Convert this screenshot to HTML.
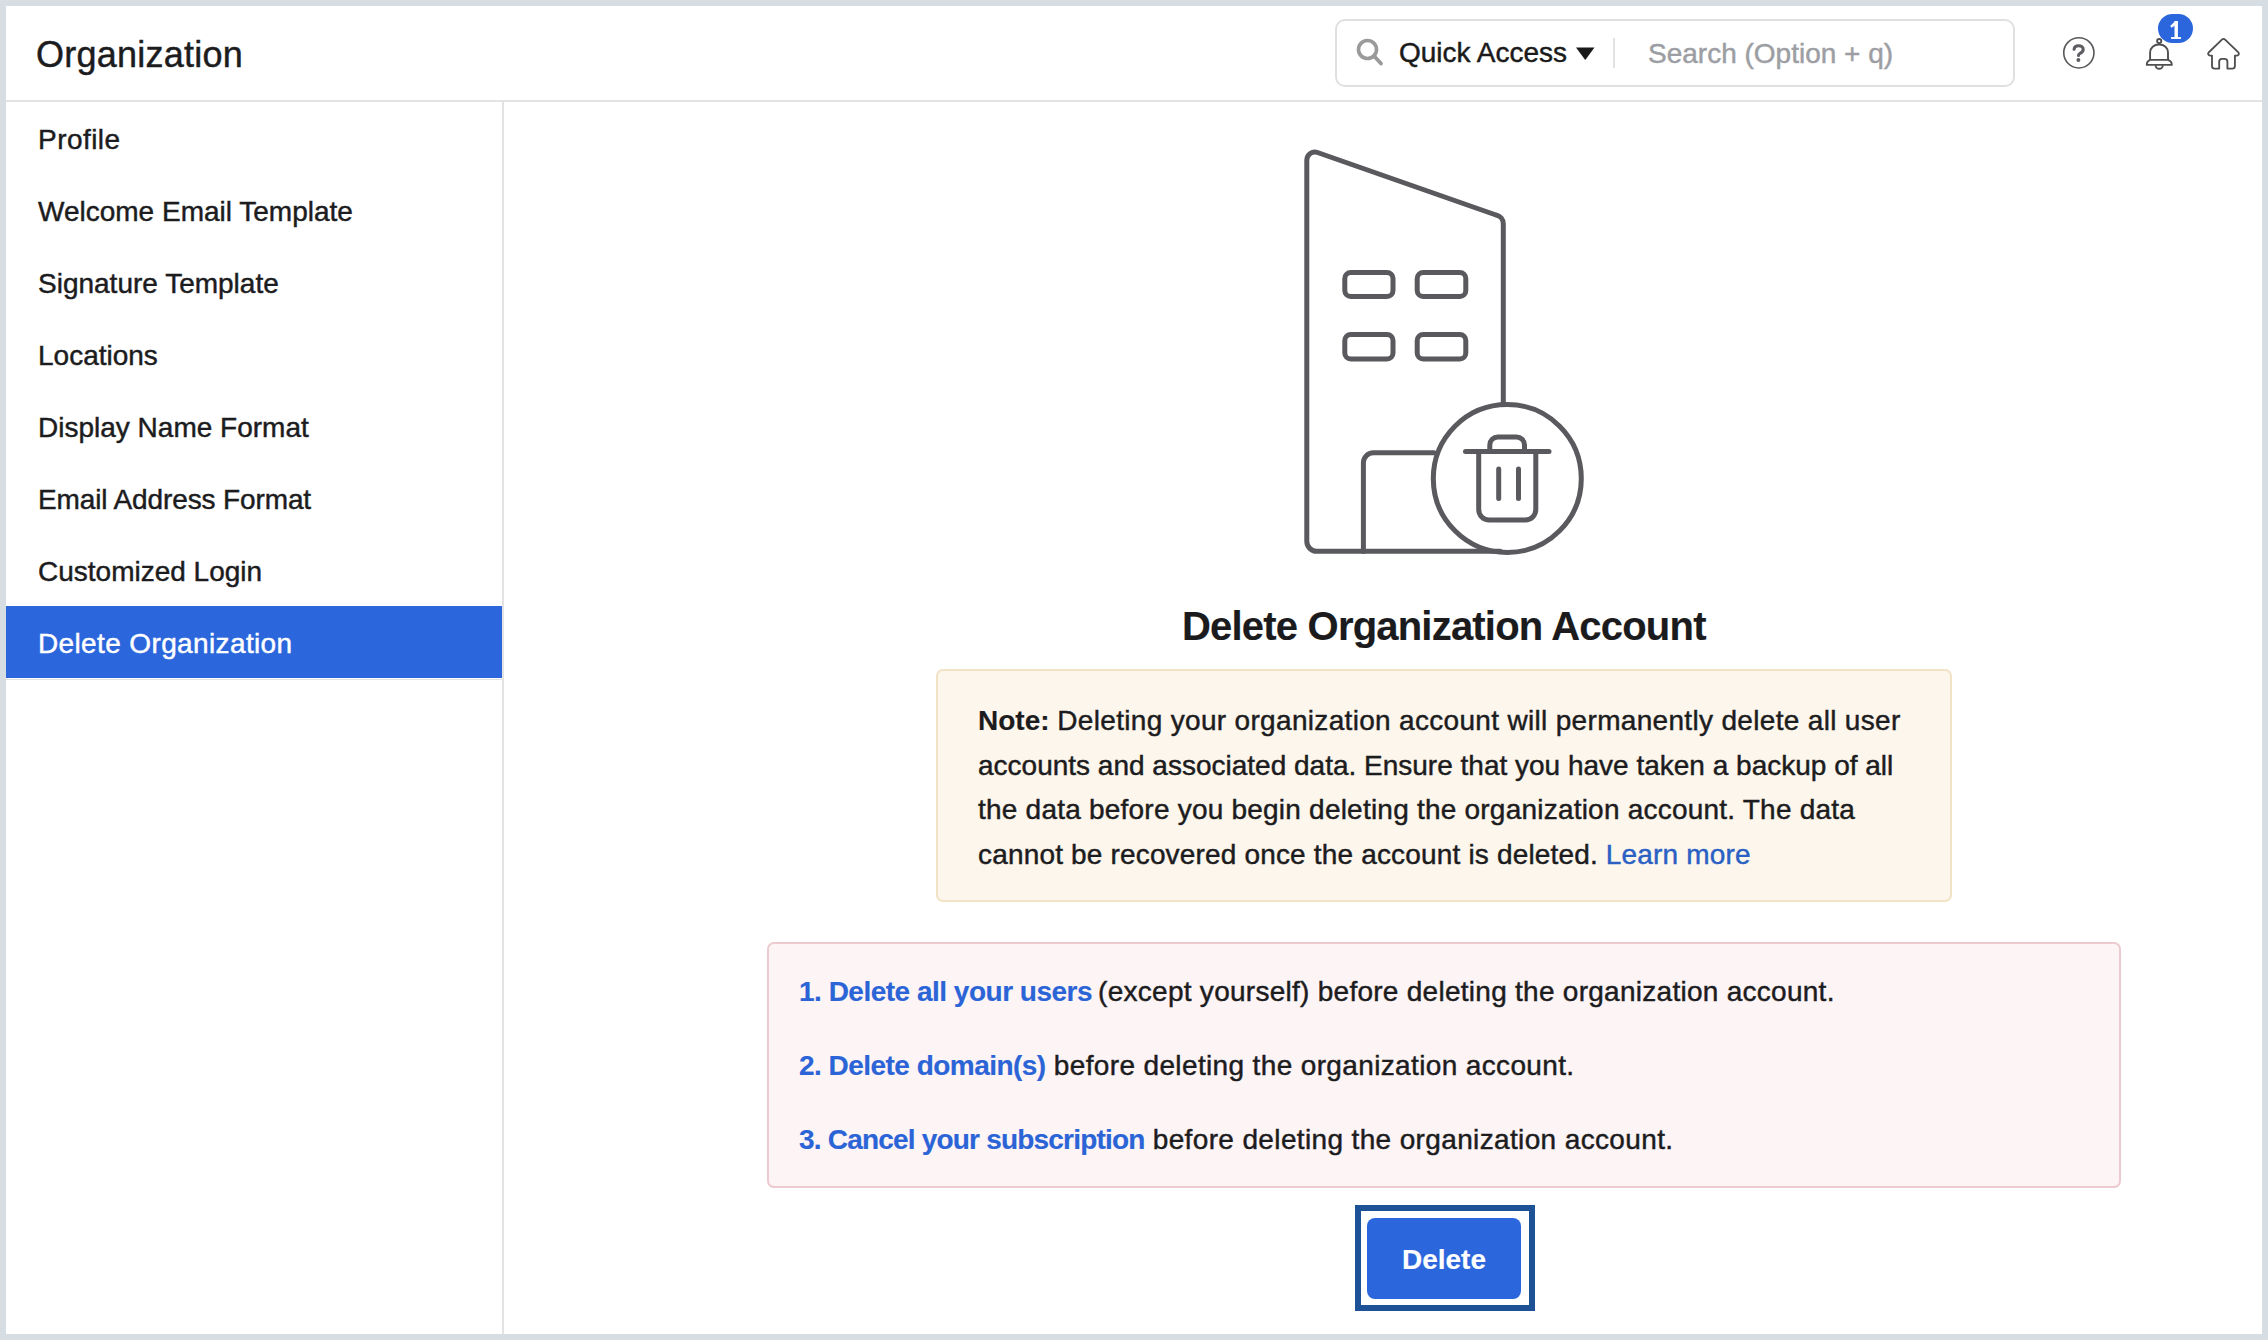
<!DOCTYPE html>
<html><head><meta charset="utf-8">
<style>
html,body{margin:0;padding:0;}
body{width:2268px;height:1340px;background:#d6dee4;position:relative;overflow:hidden;font-family:"Liberation Sans",sans-serif;color:#1c1c1e;-webkit-text-stroke:0.45px currentColor;}
.a{position:absolute;white-space:nowrap;}
b,.ttl,.btn{-webkit-text-stroke:0.15px currentColor;}
.app{position:absolute;left:6px;top:6px;width:2256px;height:1328px;background:#fff;}
.hline{position:absolute;left:6px;top:100px;width:2256px;height:2px;background:#e3e3e3;}
.vline{position:absolute;left:502px;top:102px;width:2px;height:1232px;background:#e3e3e3;}
.side{position:absolute;left:6px;top:102px;width:496px;}
.item{height:72px;line-height:72px;font-size:28px;padding-left:32px;white-space:nowrap;}
.item span{position:relative;top:2px;}
.item.sel{background:#2c66dc;color:#fff;}
.search{left:1335px;top:19px;width:676px;height:64px;border:2px solid #e0e0e2;border-radius:10px;}
.qa{left:1399px;top:37px;font-size:28px;line-height:32px;color:#1a1a1a;}
.ph{left:1648px;top:38px;font-size:28px;line-height:32px;color:#9c9ea3;}
.sep{left:1613px;top:38px;width:2px;height:30px;background:#e2e2e2;}
.badge{left:2158px;top:14.4px;width:34.8px;height:29px;border-radius:14.5px;background:#2c66dc;}
.ttl{left:1182px;top:604px;font-size:40px;line-height:44px;letter-spacing:-0.8px;font-weight:bold;color:#1b1b1d;}
.note{left:936px;top:669px;width:1012px;height:229px;border:2px solid #f2e2c6;border-radius:7px;background:#fdf6ec;}
.nl{left:978px;font-size:28px;line-height:44.4px;color:#1c1c1e;}
.lnk{color:#2a5fc4;}
.req{left:767px;top:942px;width:1350px;height:242px;border:2px solid #eccad0;border-radius:7px;background:#fdf4f5;}
.li{left:799px;font-size:28px;line-height:40px;color:#1c1c1e;}
.li b{color:#2b64d6;}
.ring{left:1355px;top:1205px;width:168px;height:94px;border:6px solid #1e5296;}
.btn{left:1367px;top:1218px;width:154px;height:81px;border-radius:8px;background:#2c66dc;color:#fff;font-weight:bold;font-size:28px;line-height:83px;text-align:center;}
</style></head>
<body>
<div class="app"></div>
<div class="hline"></div>
<div class="vline"></div>
<div class="a" style="left:6px;top:679px;width:496px;height:1px;background:#e2e2e2"></div>

<div class="a" style="left:36px;top:37px;font-size:36px;line-height:36px;letter-spacing:0.25px">Organization</div>

<div class="a search"></div>
<svg class="a" style="left:1350px;top:34px" width="40" height="36" viewBox="0 0 40 36">
  <circle cx="17.5" cy="15.5" r="9" fill="none" stroke="#9a9a9a" stroke-width="3.6"/>
  <line x1="24.5" y1="22.5" x2="31" y2="29.5" stroke="#9a9a9a" stroke-width="3.8" stroke-linecap="round"/>
</svg>
<div class="a qa">Quick Access</div>
<svg class="a" style="left:1574px;top:45px" width="24" height="18" viewBox="0 0 24 18">
  <path d="M2 2.5 H20.5 L11.25 15 Z" fill="#1a1a1a"/>
</svg>
<div class="a sep"></div>
<div class="a ph">Search (Option + q)</div>

<!-- help -->
<svg class="a" style="left:2058px;top:32px" width="42" height="42" viewBox="0 0 42 42">
  <circle cx="20.85" cy="20.85" r="15.1" fill="none" stroke="#58585c" stroke-width="1.6"/>
  <path d="M16.1 17.3 C16.3 14.9 18.3 13.7 20.7 13.7 C23.3 13.7 25.2 15.2 25.2 17.4 C25.2 19.7 23.4 20.5 21.9 21.5 C20.9 22.1 20.5 22.7 20.5 23.5" fill="none" stroke="#5c5c61" stroke-width="3.1" stroke-linecap="round"/>
  <circle cx="20.4" cy="28" r="1.95" fill="#5c5c61"/>
</svg>
<!-- bell -->
<svg class="a" style="left:2140px;top:30px" width="40" height="45" viewBox="2140 30 40 45">
  <g fill="none" stroke="#4f4f52" stroke-width="1.9" stroke-linejoin="round">
    <circle cx="2159.2" cy="41.1" r="2.1"/>
    <path d="M2150.1 59.9 V52.5 C2150.1 47.6 2154 44.5 2159.1 44.5 C2164.2 44.5 2168 47.6 2168 52.5 V59.9 Z"/>
    <path d="M2150.1 59.9 C2148.2 60.6 2146.8 62.3 2146.8 64.9 H2171.8 C2171.8 62.3 2170.2 60.6 2168 59.9"/>
    <path d="M2155.6 65.2 A3.6 3.6 0 0 0 2162.8 65.2"/>
  </g>
</svg>
<div class="a badge"></div>
<svg class="a" style="left:2165px;top:16px" width="22" height="26" viewBox="2165 16 22 26">
  <g fill="#fff">
    <rect x="2174.5" y="21.1" width="3.4" height="17.6"/>
    <path d="M2175.2 21.1 H2177.9 V24 L2174.6 25.8 L2171.6 27.8 L2170.2 25.9 Z"/>
    <rect x="2171" y="37.1" width="10" height="1.8"/>
  </g>
</svg>
<!-- home -->
<svg class="a" style="left:2202px;top:32px" width="44" height="44" viewBox="0 0 44 44">
  <path d="M10 23.6 H8.2 C6.2 23.6 5.4 21.6 6.9 20.2 L19.9 7.6 C20.8 6.7 22.2 6.7 23.1 7.6 L36.1 20.2 C37.6 21.6 36.8 23.6 34.8 23.6 H32.9 V34 C32.9 35.5 31.8 36.6 30.3 36.6 H25.4 V29.6 C25.4 27.9 24.3 26.8 22.6 26.8 H20 C18.3 26.8 17.2 27.9 17.2 29.6 V36.6 H12.6 C11.1 36.6 10 35.5 10 34 Z" fill="none" stroke="#4f4f52" stroke-width="1.85" stroke-linejoin="round"/>
</svg>

<div class="side">
  <div class="item"><span style="letter-spacing:0.45px">Profile</span></div>
  <div class="item"><span>Welcome Email Template</span></div>
  <div class="item"><span>Signature Template</span></div>
  <div class="item"><span>Locations</span></div>
  <div class="item"><span>Display Name Format</span></div>
  <div class="item"><span style="letter-spacing:-0.12px">Email Address Format</span></div>
  <div class="item"><span>Customized Login</span></div>
  <div class="item sel"><span style="letter-spacing:0.37px">Delete Organization</span></div>
</div>

<!-- illustration -->
<svg class="a" style="left:1280px;top:130px" width="320" height="440" viewBox="1280 130 320 440">
  <g fill="none" stroke="#59595e" stroke-width="5" stroke-linecap="round" stroke-linejoin="round">
    <path d="M1363.4 551.3 H1316.8 A10 10 0 0 1 1306.8 541.3 V160 A8 8 0 0 1 1317.5 152.5 L1496 215 A9 9 0 0 1 1503.3 224 V403.5"/>
    <path d="M1363.4 551.3 V462.8 A10 10 0 0 1 1373.4 452.8 H1434"/>
    <path d="M1363.4 551.3 H1500"/>
    <rect x="1344.8" y="272.5" width="48.2" height="24" rx="6"/>
    <rect x="1417.2" y="272.5" width="48.6" height="24" rx="6"/>
    <rect x="1344.8" y="334.5" width="48.2" height="24.5" rx="6"/>
    <rect x="1417.2" y="334.5" width="48.6" height="24.5" rx="6"/>
    <circle cx="1507.3" cy="478.5" r="74"/>
    <path d="M1465.5 451.6 H1549"/>
    <path d="M1489.8 451.6 V445 A8 8 0 0 1 1497.8 437 H1516.5 A8 8 0 0 1 1524.5 445 V451.6"/>
    <path d="M1478.7 451.6 V509.5 A10.5 10.5 0 0 0 1489.2 520 H1525.3 A10.5 10.5 0 0 0 1535.8 509.5 V451.6"/>
    <path d="M1498.7 469 V498.5 M1518.5 469 V498.5"/>
  </g>
</svg>

<div class="a ttl">Delete Organization Account</div>

<div class="a note"></div>
<div class="a nl" style="top:699px"><b>Note:</b> <span style="letter-spacing:0.32px">Deleting your organization account will permanently delete all user</span></div>
<div class="a nl" style="top:744px">accounts and associated data. Ensure that you have taken a backup of all</div>
<div class="a nl" style="top:788px;letter-spacing:0.22px">the data before you begin deleting the organization account. The data</div>
<div class="a nl" style="top:833px;letter-spacing:0.17px">cannot be recovered once the account is deleted. <span class="lnk">Learn more</span></div>

<div class="a req"></div>
<div class="a li" style="top:972px"><b style="letter-spacing:-0.5px">1. Delete all your users</b><span style="letter-spacing:0.27px;margin-left:-2px"> (except yourself) before deleting the organization account.</span></div>
<div class="a li" style="top:1046px"><b style="letter-spacing:-0.53px">2. Delete domain(s)</b><span style="letter-spacing:0.36px"> before deleting the organization account.</span></div>
<div class="a li" style="top:1120px"><b style="letter-spacing:-0.8px">3. Cancel your subscription</b><span style="letter-spacing:0.36px"> before deleting the organization account.</span></div>

<div class="a ring"></div>
<div class="a btn">Delete</div>
</body></html>
